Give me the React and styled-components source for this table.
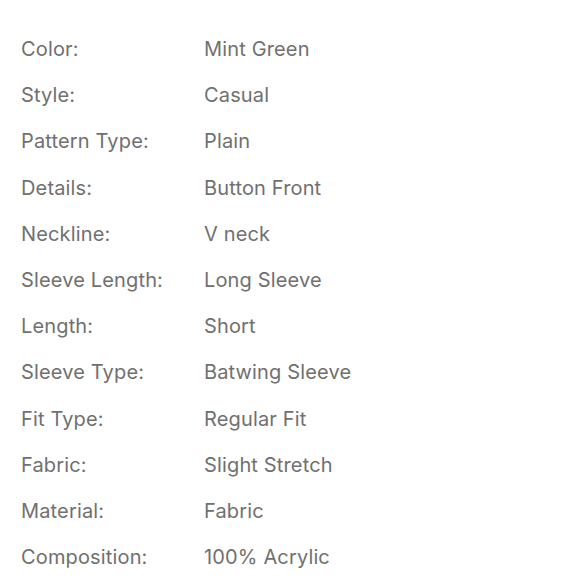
import React from "react";
import styled, { createGlobalStyle } from "styled-components";

const GlobalStyle = createGlobalStyle`
  html, body {
    margin: 0;
    padding: 0;
    background: #ffffff;
  }
  body {
    font-family: Inter, "Liberation Sans", Arial, sans-serif;
    -webkit-font-smoothing: antialiased;
  }
`;

// product attributes shown in the spec list
const specs = [
  ["Color:", "Mint Green"],
  ["Style:", "Casual"],
  ["Pattern Type:", "Plain"],
  ["Details:", "Button Front"],
  ["Neckline:", "V neck"],
  ["Sleeve Length:", "Long Sleeve"],
  ["Length:", "Short"],
  ["Sleeve Type:", "Batwing Sleeve"],
  ["Fit Type:", "Regular Fit"],
  ["Fabric:", "Slight Stretch"],
  ["Material:", "Fabric"],
  ["Composition:", "100% Acrylic"],
];

export default function App() {
  return (
    <>
      <GlobalStyle />
      <Page>
        <TopEdge />
        <SpecList>
          {specs.map(([label, value]) => (
            <SpecRow key={label}>
              <Label>{label}</Label>
              <Value>{value}</Value>
            </SpecRow>
          ))}
        </SpecList>
        <BottomEdge />
      </Page>
    </>
  );
}

const Page = styled.div`
  width: 580px;
  height: 580px;
  overflow: hidden;
  display: flex;
  flex-direction: column;
  background: #ffffff;
`;

const TopEdge = styled.div`
  width: 290px;
  height: 3px;
  background: linear-gradient(to right, #fafafa, #f6f6f6 60%, #fbfbfb);
`;

const SpecList = styled.div`
  display: flex;
  flex-direction: column;
  padding: 26px 0 0 21px;
  flex: 1;
`;

const SpecRow = styled.div`
  display: grid;
  grid-template-columns: 183px 1fr;
  height: 46.2px;
  align-items: center;
  font-size: 20px;
  color: #707070;
  letter-spacing: 0.15px;
`;

const Label = styled.span`
  white-space: nowrap;
`;

const Value = styled.span`
  white-space: nowrap;
`;

const BottomEdge = styled.div`
  width: 310px;
  height: 7px;
  background: #f7f7f7;
`;
